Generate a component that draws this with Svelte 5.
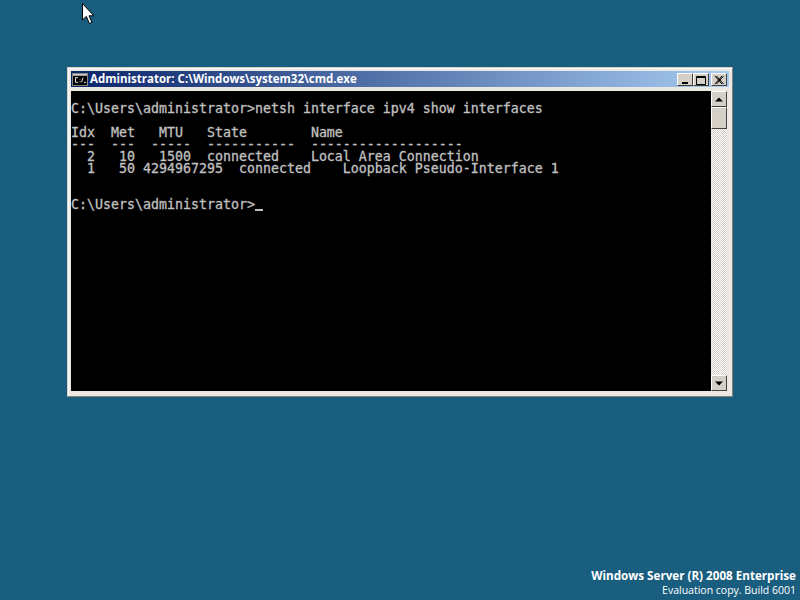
<script>
  const lines = [
    "",
    "C:\\Users\\administrator>netsh interface ipv4 show interfaces",
    "",
    "Idx  Met   MTU   State        Name",
    "---  ---  -----  -----------  -------------------",
    "  2   10   1500  connected    Local Area Connection",
    "  1   50 4294967295  connected    Loopback Pseudo-Interface 1",
    "",
    "",
  ];
</script>

<div class="desktop">
  <svg class="pointer" width="14" height="22" viewBox="0 0 14 22">
    <path d="M1.5 0.5V17L5.3 13.4L8.4 20.5L11 19.4L8 12.8H12.8Z" fill="#fff" stroke="#000" stroke-width="1" />
  </svg>

  <div class="window">
    <div class="titlebar">
      <svg class="appicon" width="16" height="13" viewBox="0 0 16 14" preserveAspectRatio="none">
        <rect x="0.5" y="0.5" width="15" height="13" fill="#c8c8c8" stroke="#888" />
        <rect x="1" y="3" width="14" height="10" fill="#000" />
        <path d="M6 5H3.5V10H6M8 7V7.5M8 9V10M9.5 10L11 5M12 10H14" fill="none" stroke="#e8e8e8" />
      </svg>
      <span class="title">Administrator: C:\Windows\system32\cmd.exe</span>
      <div class="caption">
        <button class="capbtn" aria-label="Minimize">
          <svg width="12" height="10" viewBox="0 0 12 10"><rect x="3" y="7" width="6" height="2" fill="#000" /></svg>
        </button>
        <button class="capbtn" aria-label="Maximize">
          <svg width="12" height="10" viewBox="0 0 12 10"><path d="M1.5 1.5H10.5V9.5H1.5ZM1 2.5H11" fill="none" stroke="#000" /></svg>
        </button>
        <button class="capbtn close" aria-label="Close">
          <svg width="12" height="10" viewBox="0 0 12 10"><path d="M2 1L9 9M3.5 1L10.5 9M9 1L2 9M10.5 1L3.5 9" fill="none" stroke="#000" /></svg>
        </button>
      </div>
    </div>

    <div class="body">
      <div class="console">
        {#each lines as line}
          <div class="line">{line}</div>
        {/each}
        <div class="line">C:\Users\administrator&gt;<span class="caret"></span></div>
      </div>
      <div class="scrollbar">
        <div class="sbtn">
          <svg width="8" height="5" viewBox="0 0 8 5"><path d="M4 0.5L8 4.5H0Z" fill="#000" /></svg>
        </div>
        <div class="thumb"></div>
        <div class="track"></div>
        <div class="sbtn">
          <svg width="8" height="5" viewBox="0 0 8 5"><path d="M0 0.5H8L4 4.5Z" fill="#000" /></svg>
        </div>
      </div>
    </div>
  </div>

  <div class="watermark">
    <div class="edition">Windows Server (R) 2008 Enterprise</div>
    <div class="build">Evaluation copy. Build 6001</div>
  </div>
</div>

<style>
  :global(body) {
    margin: 0;
  }

  .desktop {
    position: relative;
    width: 800px;
    height: 600px;
    box-sizing: border-box;
    padding: 67px 67px 0;
    background: #1a5e7f;
    display: flex;
    flex-direction: column;
    overflow: hidden;
  }

  .pointer {
    position: absolute;
    left: 81px;
    top: 3px;
  }

  .window {
    width: 666px;
    height: 330px;
    box-sizing: border-box;
    padding: 3px;
    background: #ece9e4;
    border: 1px solid;
    border-color: #d4d0c8 #80807c #80807c #d4d0c8;
    box-shadow: inset 1px 1px #fff;
  }

  .titlebar {
    height: 20px;
    display: flex;
    align-items: flex-start;
    gap: 2px;
    padding: 0 2px 0 1px;
    box-sizing: border-box;
    background: linear-gradient(90deg, #0a246a, #a6caf0);
    background-size: 100% 16px;
    background-repeat: no-repeat;
  }

  .appicon {
    flex: none;
    margin-top: 2px;
  }

  .title {
    flex: 1;
    margin-top: 1px;
    color: #fff;
    font: bold 11.5px/14px "Open Sans", sans-serif;
    white-space: nowrap;
  }

  .caption {
    display: flex;
    margin-top: 2px;
  }

  .capbtn {
    width: 16px;
    height: 13px;
    padding: 0;
    display: flex;
    align-items: center;
    justify-content: center;
    background: #d4d0c8;
    border: 1px solid;
    border-color: #fff #404040 #404040 #fff;
  }

  .close {
    margin-left: 2px;
  }

  .body {
    display: flex;
    height: 300px;
  }

  .console {
    width: 640px;
    height: 300px;
    background: #000;
    color: #c0c0c0;
    font: 13.29px/12px "DejaVu Sans Mono", monospace;
    -webkit-text-stroke: 0.3px #c0c0c0;
  }

  .line {
    height: 12px;
    white-space: pre;
  }

  .caret {
    display: inline-block;
    width: 8px;
    height: 12px;
    vertical-align: top;
    box-shadow: inset 0 -2px #c0c0c0;
  }

  .scrollbar {
    width: 16px;
    display: flex;
    flex-direction: column;
  }

  .sbtn {
    height: 16px;
    box-sizing: border-box;
    display: flex;
    align-items: center;
    justify-content: center;
    background: #d4d0c8;
    border: 1px solid;
    border-color: #fff #404040 #404040 #fff;
  }

  .thumb {
    height: 22px;
    box-sizing: border-box;
    background: #d4d0c8;
    border: 1px solid;
    border-color: #fff #404040 #404040 #fff;
  }

  .track {
    flex: 1;
    background: repeating-conic-gradient(#d4d0c8 0 25%, #fff 0 50%) 0 0 / 2px 2px;
  }

  .watermark {
    margin-top: auto;
    margin-right: -63px;
    padding-bottom: 3px;
    text-align: right;
    color: #fff;
    font: 14px/14px "Open Sans", sans-serif;
  }

  .edition {
    font-size: 11.65px;
    font-weight: bold;
  }

  .build {
    font-size: 10.5px;
  }
</style>
